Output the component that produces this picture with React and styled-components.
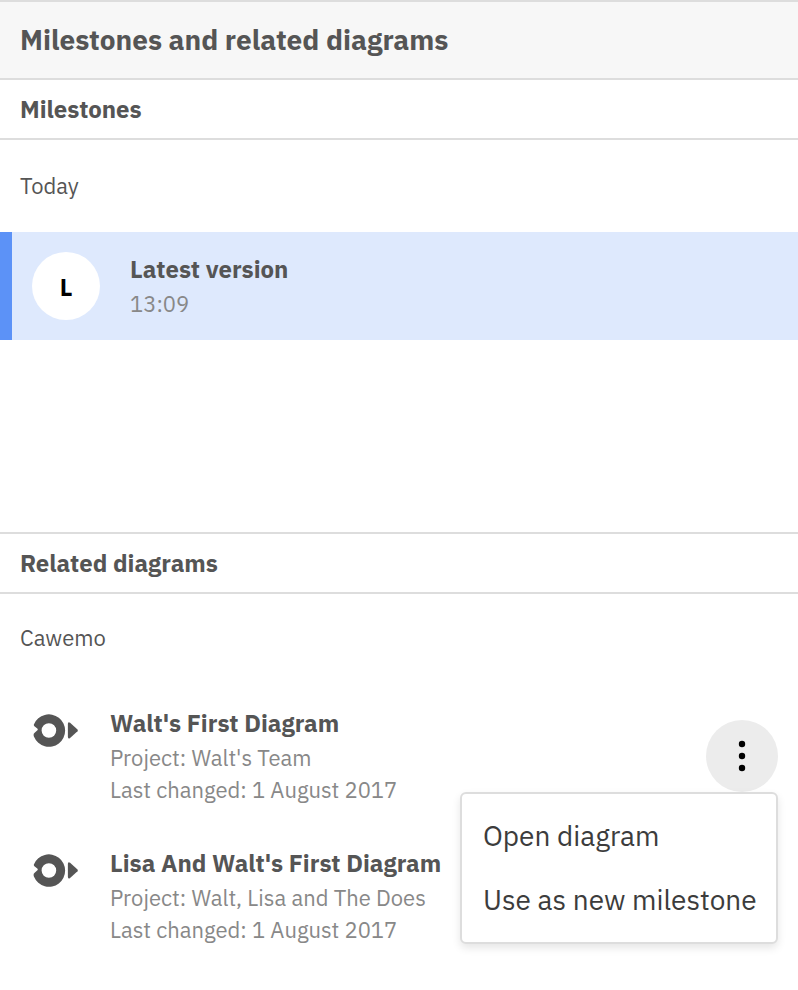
import React from "react";
import styled, { createGlobalStyle } from "styled-components";

const GlobalStyle = createGlobalStyle`
  *, *::before, *::after { box-sizing: border-box; }
  body {
    margin: 0;
    background: #fff;
    color: #555;
    font-family: "IBM Plex Sans", Roboto, "Noto Sans", sans-serif;
    -webkit-font-smoothing: antialiased;
  }
  h1, h2, h3, p, ul { margin: 0; padding: 0; }
  ul { list-style: none; }
`;

const Panel = styled.main`
  min-height: 100vh;
  border-top: 2px solid #ddd;
`;

const PanelHeader = styled.header`
  padding: 20px;
  background: #f7f7f7;
  border-bottom: 2px solid #ddd;
`;

const PanelTitle = styled.h1`
  font-size: 28px;
  line-height: 36px;
  font-weight: 700;
`;

const SectionTitle = styled.h2`
  padding: 14px 20px;
  border-top: ${({ $divided }) => ($divided ? "2px solid #ddd" : "none")};
  border-bottom: 2px solid #ddd;
  font-size: 24px;
  line-height: 30px;
  font-weight: 700;
`;

const MilestoneList = styled.div`
  min-height: 392px;
`;

const GroupLabel = styled.h3`
  padding: ${({ $compact }) => ($compact ? "28px 20px" : "30px 20px")};
  font-size: 22px;
  line-height: 32px;
  font-weight: 400;
`;

const Milestone = styled.button`
  display: flex;
  align-items: flex-end;
  gap: 30px;
  width: 100%;
  min-height: 108px;
  padding: 0 20px 20px;
  border: 0;
  border-left: 12px solid #5c92f7;
  background: #dee9fd;
  color: inherit;
  font-family: inherit;
  text-align: left;
  cursor: pointer;
`;

const Avatar = styled.span`
  display: grid;
  place-items: center;
  width: 68px;
  height: 68px;
  padding-top: 2px;
  border-radius: 50%;
  background: #fff;
  color: #000;
  font-size: 24px;
  font-weight: 700;
`;

const Details = styled.span`
  display: flex;
  flex: 1;
  flex-direction: column;
`;

const Name = styled.strong`
  font-size: 24px;
  line-height: 38px;
  font-weight: 700;
`;

const Meta = styled.span`
  color: #888;
  font-size: 22px;
  line-height: 32px;
`;

const DiagramList = styled.ul`
  display: flex;
  flex-direction: column;
  gap: 36px;
  padding: 22px 20px;
`;

const Diagram = styled.li`
  display: flex;
  align-items: flex-start;
  gap: 30px;
  min-height: 104px;
`;

const DiagramIcon = styled.svg`
  width: 48px;
  height: 34px;
  margin: 9px 0 0 12px;
  fill: #555;
`;

const Actions = styled.div`
  position: relative;
  align-self: center;
`;

const MenuButton = styled.button`
  display: grid;
  place-items: center;
  width: 72px;
  height: 72px;
  padding: 0;
  border: 0;
  border-radius: 50%;
  background: #ececec;
  cursor: pointer;
`;

const Menu = styled.div`
  position: absolute;
  z-index: 1;
  top: 100%;
  right: 0;
  min-width: 318px;
  padding: 10px 0;
  border: 2px solid #ddd;
  border-radius: 6px;
  background: #fff;
  box-shadow: 0 4px 8px rgba(0, 0, 0, 0.1);
`;

const MenuItem = styled.button`
  display: block;
  width: 100%;
  padding: 0 16px 0 21px;
  border: 0;
  background: none;
  color: #3c3c3c;
  font-family: inherit;
  font-size: 28px;
  line-height: 64px;
  text-align: left;
  white-space: nowrap;
  cursor: pointer;
`;

const diagrams = [
  { name: "Walt's First Diagram", project: "Walt's Team", changed: "1 August 2017", menuOpen: true },
  { name: "Lisa And Walt's First Diagram", project: "Walt, Lisa and The Does", changed: "1 August 2017" },
];

function ProcessIcon() {
  return (
    <DiagramIcon viewBox="0 0 48 34" aria-hidden="true">
      <path
        fillRule="evenodd"
        d="M2 11.3A16.2 16.2 0 1 1 2 23.8Q1 21.4 2.4 20.1L5.4 17.3Q6.2 16.4 5.3 15.6L2.4 13.2Q1.4 12.4 2 11.3ZM16.9 10.2a7.3 7.3 0 1 0 0 14.6a7.3 7.3 0 1 0 0-14.6Z"
      />
      <path d="M35.9 11Q35.9 8.2 38.1 9.7L45.5 16.6Q46.3 17.4 45.5 18.2L38.1 25Q35.9 26.5 35.9 23.7Z" />
    </DiagramIcon>
  );
}

function DiagramActions() {
  return (
    <Actions>
      <MenuButton type="button" aria-label="Diagram actions" aria-haspopup="menu" aria-expanded="true">
        <svg width="8" height="32" viewBox="0 0 8 32" aria-hidden="true">
          <circle cx="4" cy="4" r="3.2" />
          <circle cx="4" cy="16" r="3.2" />
          <circle cx="4" cy="28" r="3.2" />
        </svg>
      </MenuButton>
      <Menu role="menu">
        <MenuItem type="button" role="menuitem">Open diagram</MenuItem>
        <MenuItem type="button" role="menuitem">Use as new milestone</MenuItem>
      </Menu>
    </Actions>
  );
}

export default function App() {
  return (
    <>
      <GlobalStyle />
      <Panel>
        <PanelHeader>
          <PanelTitle>Milestones and related diagrams</PanelTitle>
        </PanelHeader>
        <section>
          <SectionTitle>Milestones</SectionTitle>
          <MilestoneList>
            <GroupLabel>Today</GroupLabel>
            <Milestone type="button" aria-current="true">
              <Avatar>L</Avatar>
              <Details>
                <Name>Latest version</Name>
                <Meta>13:09</Meta>
              </Details>
            </Milestone>
          </MilestoneList>
        </section>
        <section>
          <SectionTitle $divided>Related diagrams</SectionTitle>
          <GroupLabel $compact>Cawemo</GroupLabel>
          <DiagramList>
            {diagrams.map((diagram) => (
              <Diagram key={diagram.name}>
                <ProcessIcon />
                <Details>
                  <Name>{diagram.name}</Name>
                  <Meta>Project: {diagram.project}</Meta>
                  <Meta>Last changed: {diagram.changed}</Meta>
                </Details>
                {diagram.menuOpen && <DiagramActions />}
              </Diagram>
            ))}
          </DiagramList>
        </section>
      </Panel>
    </>
  );
}
